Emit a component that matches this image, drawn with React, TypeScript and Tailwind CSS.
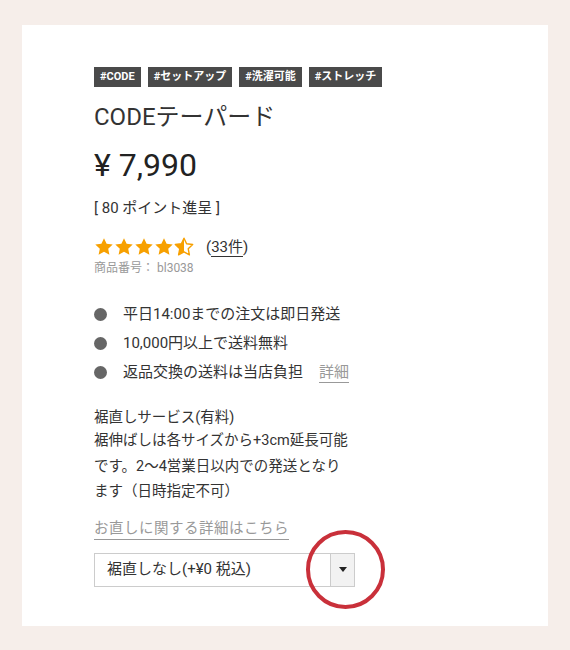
const jp = { fontFamily: '"Roboto", "Noto Sans CJK JP", sans-serif' }

function Star({ half = false }: { half?: boolean }) {
  const d = 'M10 1.2l2.6 5.6 6.1.7-4.5 4.2 1.2 6.1L10 14.8l-5.4 3 1.2-6.1L1.3 7.5l6.1-.7z'
  return (
    <svg width="20" height="20" viewBox="0 0 20 20">
      <defs>
        <clipPath id="halfclip">
          <rect x="0" y="0" width="10" height="20" />
        </clipPath>
      </defs>
      {half ? (
        <>
          <path d={d} fill="none" stroke="#f7a000" strokeWidth="1.4" strokeLinejoin="round" />
          <path d={d} fill="#f7a000" clipPath="url(#halfclip)" />
        </>
      ) : (
        <path d={d} fill="#f7a000" />
      )}
    </svg>
  )
}

const tags = ['#CODE', '#セットアップ', '#洗濯可能', '#ストレッチ']

const bullets = ['平日14:00までの注文は即日発送', '10,000円以上で送料無料', '返品交換の送料は当店負担']

export default function App() {
  return (
    <div className="min-h-[650px] w-[570px] bg-[#f6eeea] pt-[25px]" style={jp}>
      <div className="relative mx-[22px] w-[526px] bg-white pb-[39px] pl-[72px] pt-[42px] text-[#333]">
        <div className="flex gap-[7px]">
          {tags.map(t => (
            <span key={t} className="flex h-[20px] items-center bg-[#4a4a4a] px-[6px] text-[11px] font-bold text-white">
              {t}
            </span>
          ))}
        </div>

        <h1 className="mt-[14px] text-[24px] leading-[32px] text-[#333]">CODEテーパード</h1>
        <div className="mt-[12px] text-[32px] leading-[40px] text-[#222]">¥ 7,990</div>
        <div className="mt-[13px] text-[15px] leading-[20px] text-[#333]">[ 80 ポイント進呈 ]</div>

        <div className="mt-[19px] flex h-[20px] items-center">
          <Star />
          <Star />
          <Star />
          <Star />
          <Star half />
          <span className="ml-[12px] text-[15px] text-[#333]">
            (<span className="border-b border-[#333]">33件</span>)
          </span>
        </div>
        <div className="mt-[3px] text-[12px] leading-[16px] text-[#999]">商品番号： bl3038</div>

        <ul className="mt-[24px]">
          {bullets.map((b, i) => (
            <li key={b} className="flex h-[29px] items-center text-[15px] text-[#333]">
              <span className="mr-[16px] h-[13px] w-[13px] rounded-full bg-[#666]" />
              {b}
              {i === 2 && (
                <span className="ml-[16px] border-b border-[#999] leading-[20px] text-[#999]">詳細</span>
              )}
            </li>
          ))}
        </ul>

        <div className="mt-[21px] text-[14.5px] leading-[20px] text-[#333]">裾直しサービス(有料)</div>
        <p className="text-[14.5px] leading-[25.5px] text-[#333]">
          裾伸ばしは各サイズから+3cm延長可能
          <br />
          です。2〜4営業日以内での発送となり
          <br />
          ます（日時指定不可）
        </p>

        <div className="mt-[11px]">
          <span className="inline-block border-b border-[#999] text-[14.5px] leading-[20px] tracking-[0.5px] text-[#999]">
            お直しに関する詳細はこちら
          </span>
        </div>

        <div className="mt-[13px] flex h-[34px] w-[261px] border border-[#ccc]">
          <div className="flex flex-1 items-center pl-[12px] text-[15px] text-[#333]">裾直しなし(+¥0 税込)</div>
          <div className="flex w-[24px] items-center justify-center border-l border-[#ccc] bg-[#f2f2f2]">
            <span className="h-0 w-0 border-x-[4px] border-t-[5px] border-x-transparent border-t-[#222]" />
          </div>
        </div>

        <div className="pointer-events-none absolute left-[284px] top-[505px] h-[79px] w-[79px] rounded-full border-[4px] border-[#c9303a]" />
      </div>
    </div>
  )
}
